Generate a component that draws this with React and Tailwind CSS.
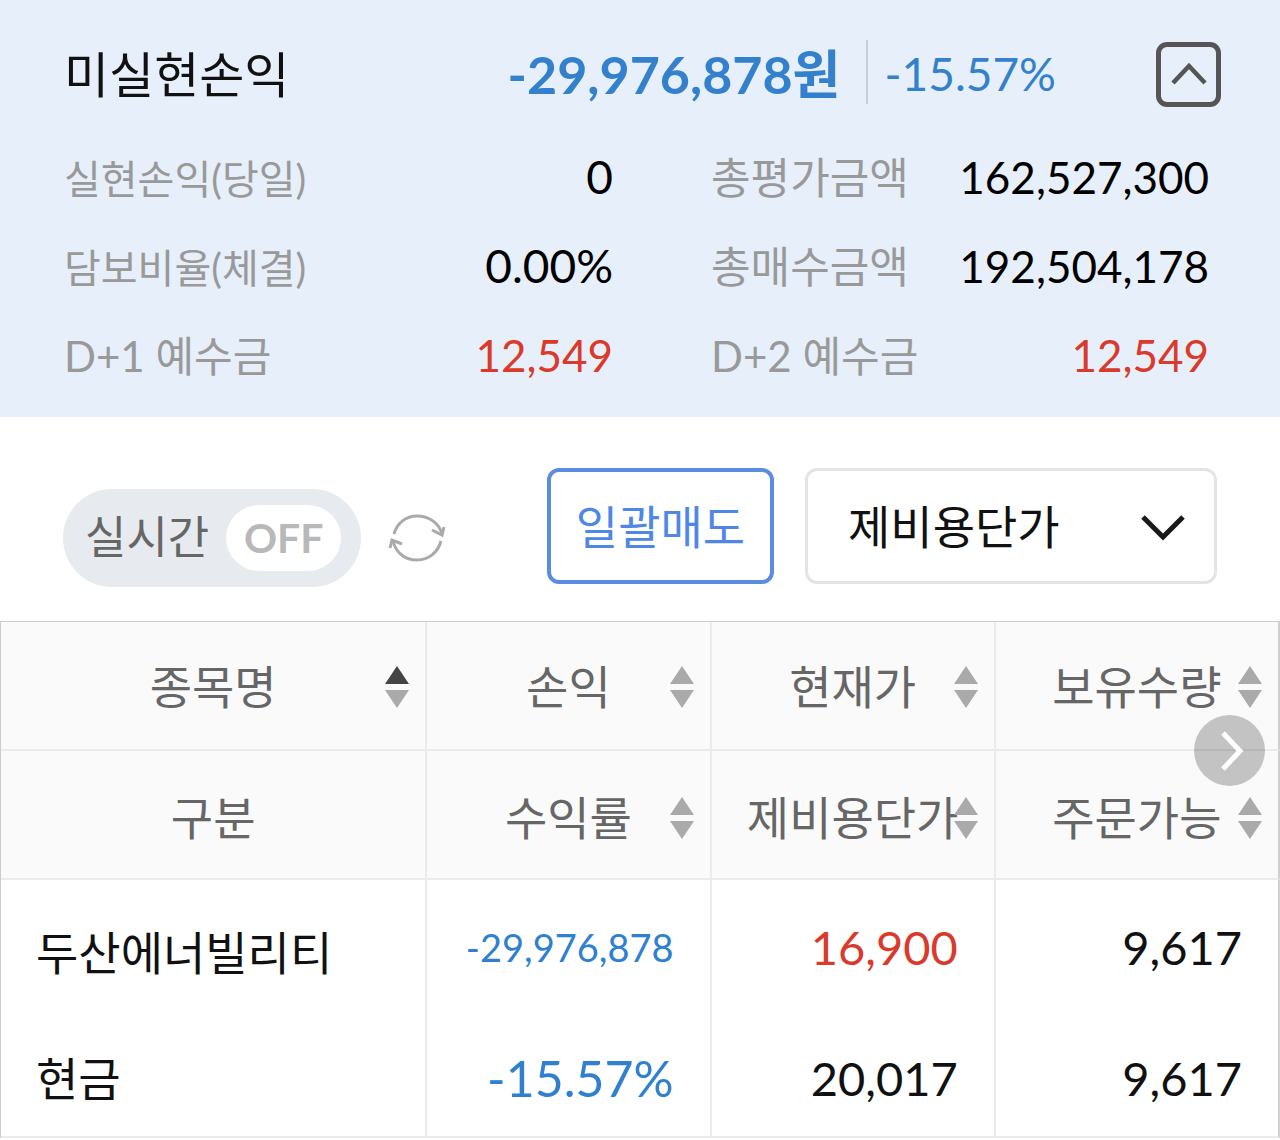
import React from 'react';

const pageFont = "font-['Lato','Noto_Sans_CJK_KR',sans-serif]";

const metrics = [
  { label: '실현손익(당일)', value: '0', labelSize: 'text-[40px]', valueSize: 'text-[46px]', tone: 'text-black' },
  { label: '총평가금액', value: '162,527,300', labelSize: 'text-[43px]', valueSize: 'text-[44px]', tone: 'text-black' },
  { label: '담보비율(체결)', value: '0.00%', labelSize: 'text-[40px]', valueSize: 'text-[46px]', tone: 'text-black' },
  { label: '총매수금액', value: '192,504,178', labelSize: 'text-[43px]', valueSize: 'text-[44px]', tone: 'text-black' },
  { label: 'D+1 예수금', value: '12,549', labelSize: 'text-[42px]', valueSize: 'text-[44px]', tone: 'text-[#d93a2b]' },
  { label: 'D+2 예수금', value: '12,549', labelSize: 'text-[42px]', valueSize: 'text-[44px]', tone: 'text-[#d93a2b]' },
];

const headerRows = [
  {
    pad: 'pt-0.5',
    cells: [
      { label: '종목명', sort: 'asc' },
      { label: '손익', sort: 'none' },
      { label: '현재가', sort: 'none' },
      { label: '보유수량', sort: 'none' },
    ],
  },
  {
    pad: 'pt-1.5',
    cells: [
      { label: '구분' },
      { label: '수익률', sort: 'none' },
      { label: '제비용단가', sort: 'none' },
      { label: '주문가능', sort: 'none' },
    ],
  },
];

function Summary() {
  return (
    <section className="bg-[#e7effa] pt-[30px] pr-[59px] pb-[18px] pl-16">
      <div className="flex h-[88px] items-center whitespace-nowrap">
        <h1 className="flex-1 text-[49px] leading-[88px] text-[#111]">미실현손익</h1>
        <strong className="text-[52px] leading-[88px] font-bold text-[#3380cc]">-29,976,878원</strong>
        <span className="mb-1 ml-[26px] h-16 w-0.5 bg-[#c9cdd4]" />
        <span className="ml-4 text-[46px] leading-[88px] text-[#3380cc]">-15.57%</span>
        <button
          type="button"
          aria-label="접기"
          className="ml-[100px] flex size-[65px] items-center justify-center rounded-[11px] border-[5px] border-[#555]"
        >
          <svg viewBox="0 0 36 24" className="w-9 shrink-0" fill="none" stroke="#555" strokeWidth="4.5">
            <path d="M2 21 18 4 34 21" />
          </svg>
        </button>
      </div>
      <dl className="mt-3.5 mr-3 grid grid-cols-[548fr_497fr] gap-x-[98px]">
        {metrics.map((m) => (
          <div key={m.label} className="flex h-[89px] items-center justify-between whitespace-nowrap">
            <dt className={`${m.labelSize} pt-1 text-[#999]`}>{m.label}</dt>
            <dd className={`${m.valueSize} ${m.tone}`}>{m.value}</dd>
          </div>
        ))}
      </dl>
    </section>
  );
}

function RefreshIcon() {
  return (
    <svg viewBox="0 0 58 50" className="w-[58px]" fill="none" stroke="#aaa" strokeWidth="3">
      <path d="M6 21C9 10 18 3 29 3c12 0 22 7 25 18" />
      <path d="M44 17 54 22 56 14" />
      <path d="M53 28c-3 11-12 19-24 19C17 47 8 40 5 28" />
      <path d="M2 35 4 27 14 31" />
    </svg>
  );
}

function Controls() {
  return (
    <section className="flex items-start px-[63px] pt-[51px] pb-[34px] whitespace-nowrap">
      <button
        type="button"
        role="switch"
        aria-checked="false"
        className="mt-[21px] flex h-[98px] items-center rounded-full bg-[#e7eaee] pr-5 pl-[22px]"
      >
        <span className="text-[45px] text-[#666]">실시간</span>
        <span className="ml-[17px] flex h-[66px] w-[115px] items-center justify-center rounded-full bg-white text-[41px] font-bold text-[#b8b8b8]">
          OFF
        </span>
      </button>
      <button type="button" aria-label="새로고침" className="mt-[21px] ml-[27px] flex h-[98px] items-center">
        <RefreshIcon />
      </button>
      <button
        type="button"
        className="ml-auto h-[116px] w-[227px] rounded-xl border-4 border-[#5a8ce0] text-[46px] text-[#4f87e6]"
      >
        일괄매도
      </button>
      <div className="relative ml-[31px] w-[412px]">
        <select
          aria-label="단가 기준"
          className="h-[116px] w-full appearance-none rounded-xl border-[3px] border-[#e4e4e4] bg-white pl-10 text-[46px] text-[#111]"
        >
          <option>제비용단가</option>
        </select>
        <svg
          viewBox="0 0 44 28"
          className="pointer-events-none absolute top-[46px] right-8 w-11"
          fill="none"
          stroke="#1a1a1a"
          strokeWidth="5"
        >
          <path d="M2 3 22 23 42 3" />
        </svg>
      </div>
    </section>
  );
}

function SortIcon({ direction }) {
  return (
    <svg viewBox="0 0 24 42" className="w-6">
      <path d="M12 0 24 18H0Z" fill={direction === 'asc' ? '#444' : '#aaa'} />
      <path d="M0 24H24L12 42Z" fill="#aaa" />
    </svg>
  );
}

function HeaderCell({ cell, pad }) {
  return (
    <th scope="col" className="relative h-[129px] border-r-2 border-b-2 border-[#ebebeb] p-0 font-normal last:border-r-[#d0d0d0]">
      <div className={`flex items-center justify-center ${pad}`}>
        <span>{cell.label}</span>
        {cell.sort && (
          <button type="button" aria-label={`${cell.label} 정렬`} className="absolute right-4">
            <SortIcon direction={cell.sort} />
          </button>
        )}
      </div>
    </th>
  );
}

function Holdings() {
  const cell = 'h-[129px] border-r-2 border-[#ebebeb] p-0 last:border-r-[#d0d0d0]';
  return (
    <section className="relative border-t border-l border-[#ccc]">
      <table className="w-full table-fixed border-separate border-spacing-0 text-[46px] whitespace-nowrap">
        <colgroup>
          <col className="w-3/9" />
          <col className="w-2/9" />
          <col className="w-2/9" />
          <col className="w-2/9" />
        </colgroup>
        <thead className="bg-[#fafafa] text-[#666]">
          {headerRows.map((row) => (
            <tr key={row.pad}>
              {row.cells.map((c) => (
                <HeaderCell key={c.label} cell={c} pad={row.pad} />
              ))}
            </tr>
          ))}
        </thead>
        <tbody className="text-right text-[#111]">
          <tr>
            <td className={cell}><div className="pt-4 pl-[35px] text-left">두산에너빌리티</div></td>
            <td className={cell}><div className="pt-1.5 pr-9 text-[38px] text-[#2f80d0]">-29,976,878</div></td>
            <td className={cell}><div className="pt-1.5 pr-9 text-[47px] text-[#d93a2b]">16,900</div></td>
            <td className={cell}><div className="pt-1.5 pr-9 text-[47px]">9,617</div></td>
          </tr>
          <tr>
            <td className={`${cell} border-b-2`}><div className="pt-3 pl-[35px] text-left">현금</div></td>
            <td className={`${cell} border-b-2`}><div className="pt-3 pr-9 text-[50px] text-[#2f80d0]">-15.57%</div></td>
            <td className={`${cell} border-b-2`}><div className="pt-3 pr-9 text-[47px]">20,017</div></td>
            <td className={`${cell} border-b-2`}><div className="pt-3 pr-9 text-[47px]">9,617</div></td>
          </tr>
        </tbody>
      </table>
      <button
        type="button"
        aria-label="다음 열"
        className="absolute top-[93px] right-[15px] flex size-[71px] items-center justify-center rounded-full bg-black/22"
      >
        <svg viewBox="0 0 24 40" className="ml-1 w-6" fill="none" stroke="#fff" strokeWidth="5">
          <path d="M3 2 20 20 3 38" />
        </svg>
      </button>
    </section>
  );
}

export default function App() {
  return (
    <main lang="ko" className={`${pageFont} bg-white`}>
      <Summary />
      <Controls />
      <Holdings />
    </main>
  );
}
